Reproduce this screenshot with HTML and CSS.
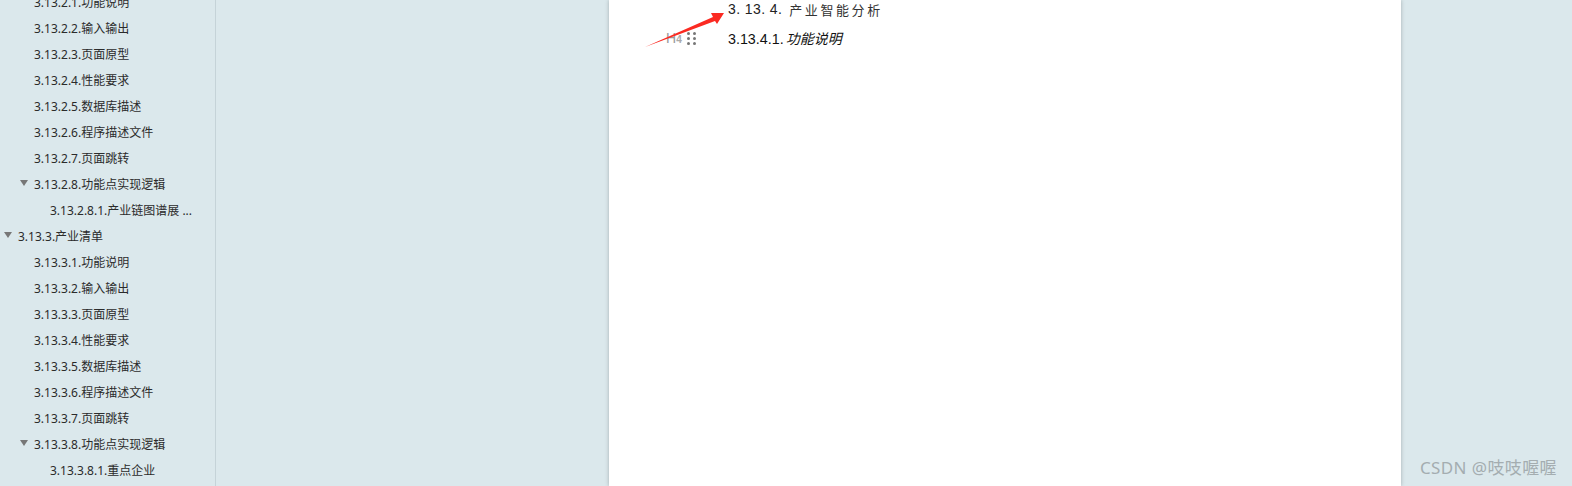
FILE: index.html
```html
<!DOCTYPE html>
<html lang="en">
<head>
    <meta charset="UTF-8">
    <meta name="viewport" content="width=device-width, initial-scale=1.0">
    <title>3.13.4 产业智能分析</title>
    <link rel="stylesheet" href="styles.css">
</head>
<body>
    <div class="app">
        <div class="sidebar">
            <div class="outline">
                <div class="row level3"><span class="caret"></span>3.13.2.1.功能说明</div>
                <div class="row level3"><span class="caret"></span>3.13.2.2.输入输出</div>
                <div class="row level3"><span class="caret"></span>3.13.2.3.页面原型</div>
                <div class="row level3"><span class="caret"></span>3.13.2.4.性能要求</div>
                <div class="row level3"><span class="caret"></span>3.13.2.5.数据库描述</div>
                <div class="row level3"><span class="caret"></span>3.13.2.6.程序描述文件</div>
                <div class="row level3"><span class="caret"></span>3.13.2.7.页面跳转</div>
                <div class="row level3"><span class="caret open"></span>3.13.2.8.功能点实现逻辑</div>
                <div class="row level4"><span class="caret"></span>3.13.2.8.1.产业链图谱展 ...</div>
                <div class="row level2"><span class="caret open"></span>3.13.3.产业清单</div>
                <div class="row level3"><span class="caret"></span>3.13.3.1.功能说明</div>
                <div class="row level3"><span class="caret"></span>3.13.3.2.输入输出</div>
                <div class="row level3"><span class="caret"></span>3.13.3.3.页面原型</div>
                <div class="row level3"><span class="caret"></span>3.13.3.4.性能要求</div>
                <div class="row level3"><span class="caret"></span>3.13.3.5.数据库描述</div>
                <div class="row level3"><span class="caret"></span>3.13.3.6.程序描述文件</div>
                <div class="row level3"><span class="caret"></span>3.13.3.7.页面跳转</div>
                <div class="row level3"><span class="caret open"></span>3.13.3.8.功能点实现逻辑</div>
                <div class="row level4"><span class="caret"></span>3.13.3.8.1.重点企业</div>
            </div>
        </div>
        <div class="workspace">
            <div class="page">
                <h3 class="heading"><span class="num">3. 13. 4.</span> <span class="title">产业智能分析</span></h3>
                <div class="subline">
                    <div class="gutter">
                        <span class="tag"><span class="tag-h">H</span>4</span>
                        <span class="drag"><i></i><i></i><i></i><i></i><i></i><i></i></span>
                    </div>
                    <h4 class="subheading">3.13.4.1.<em>功能说明</em></h4>
                </div>
                <!-- red arrow drawn on top of the screenshot -->
                <svg class="arrow" width="80" height="40" viewBox="0 0 80 40">
                    <polygon points="0,37 68,7 66,3 79,3 72,14 70,11" fill="#fb2a22"/>
                </svg>
            </div>
        </div>
    </div>
    <div class="watermark">CSDN @吱吱喔喔</div>
</body>
</html>
```

FILE: styles.css
```css
html, body {
    margin: 0;
    height: 100%;
    overflow: hidden;
}

body {
    font-family: "Noto Sans", "Noto Sans CJK SC", sans-serif;
    background-color: #dbe8ec;
    color: #2b2b2b;
}

.app {
    display: flex;
    height: 486px;
}

.sidebar {
    width: 215px;
    border-right: 1px solid #c5d3d8;
    overflow: hidden;
    flex-shrink: 0;
}

.outline {
    margin-top: -11px;
}

.row {
    display: flex;
    align-items: center;
    height: 26px;
    font-size: 12px;
    color: #2b2b2b;
    white-space: nowrap;
}

.level2 { padding-left: 4px; }
.level3 { padding-left: 20px; }
.level4 { padding-left: 36px; }

.caret {
    width: 14px;
    flex-shrink: 0;
}

.caret.open::before {
    content: "";
    display: block;
    width: 0;
    height: 0;
    margin-bottom: 3px;
    border-left: 4px solid transparent;
    border-right: 4px solid transparent;
    border-top: 6px solid #777;
}

.workspace {
    flex: 1;
    padding-left: 393px;
}

.page {
    position: relative;
    width: 673px;
    height: 486px;
    padding-left: 119px;
    background: #ffffff;
    box-shadow: 0 0 4px rgba(0, 0, 0, 0.25);
}

.heading {
    display: flex;
    align-items: center;
    height: 18px;
    margin: 0;
    font-family: "Liberation Sans", "Noto Sans CJK SC", sans-serif;
    font-size: 14px;
    font-weight: normal;
    color: #222;
}

.heading .num {
    letter-spacing: 0.4px;
    margin-right: 7px;
    white-space: pre;
}

.heading .title {
    font-size: 13px;
    letter-spacing: 2.6px;
    color: #333;
}

.subline {
    position: relative;
    display: flex;
    align-items: center;
    height: 20px;
    margin-top: 10px;
}

.gutter {
    position: absolute;
    left: -62px;
    top: 2px;
    display: flex;
    align-items: center;
    gap: 6px;
    color: #aaa;
}

.tag {
    font-family: "Liberation Sans", sans-serif;
    font-size: 10px;
    font-weight: bold;
    width: 15px;
    white-space: nowrap;
}

.tag-h {
    font-size: 14px;
    font-weight: normal;
    color: #999;
}

.drag {
    display: grid;
    grid-template-columns: 3px 3px;
    gap: 2px 3px;
}

.drag i {
    width: 3px;
    height: 3px;
    border-radius: 50%;
    background: #777;
}

.subheading {
    margin: 0;
    font-family: "Liberation Sans", "Noto Sans CJK SC", sans-serif;
    font-size: 14.3px;
    font-weight: normal;
    color: #111;
    white-space: pre;
}

.subheading em {
    font-size: 14px;
    margin-left: 2px;
}

.arrow {
    position: absolute;
    left: 36px;
    top: 10px;
}

.watermark {
    position: absolute;
    right: 15px;
    bottom: 7px;
    font-family: "Noto Sans", "Noto Sans CJK SC", sans-serif;
    font-size: 17px;
    letter-spacing: 0.4px;
    color: #a4adb0;
}
```
